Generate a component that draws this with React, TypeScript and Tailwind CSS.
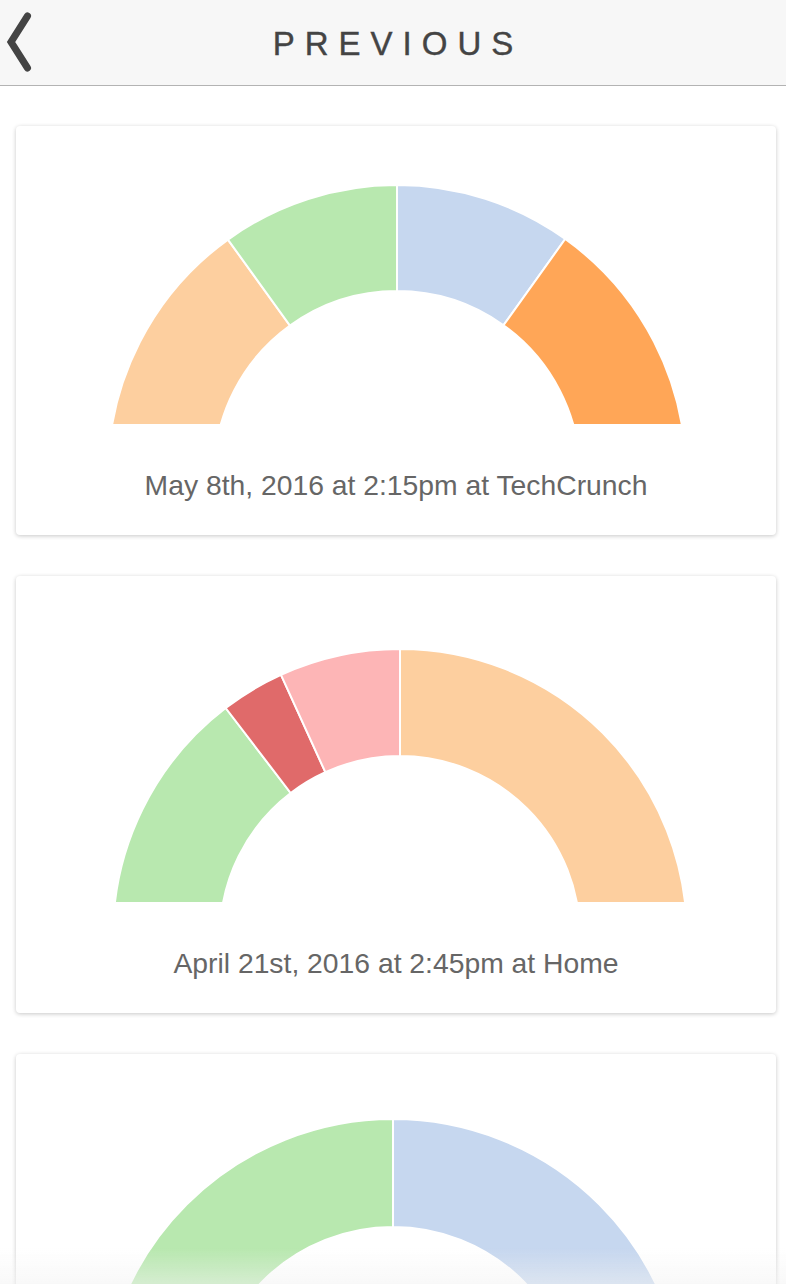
import React from 'react'

type Segment = { from: number; to: number; color: string }

interface VisitCardProps {
  height: number
  cx: number
  cy: number
  outer: number
  inner: number
  segments: Segment[]
  label?: string
}

// angle in degrees, measured clockwise from straight up
const point = (cx: number, cy: number, radius: number, angle: number) => {
  const rad = (angle * Math.PI) / 180
  return [cx + radius * Math.sin(rad), cy - radius * Math.cos(rad)]
}

const arcPath = (cx: number, cy: number, outer: number, inner: number, a0: number, a1: number) => {
  const large = a1 - a0 > 180 ? 1 : 0
  const [ox0, oy0] = point(cx, cy, outer, a0)
  const [ox1, oy1] = point(cx, cy, outer, a1)
  const [ix1, iy1] = point(cx, cy, inner, a1)
  const [ix0, iy0] = point(cx, cy, inner, a0)
  return `M${ox0} ${oy0} A${outer} ${outer} 0 ${large} 1 ${ox1} ${oy1} L${ix1} ${iy1} A${inner} ${inner} 0 ${large} 0 ${ix0} ${iy0} Z`
}

const VisitCard: React.FC<VisitCardProps> = ({ height, cx, cy, outer, inner, segments, label }) => {
  return (
    <div className="ml-4 mr-[10px] rounded bg-white shadow-[0_1px_4px_rgba(0,0,0,0.22)] overflow-hidden">
      <svg width={760} height={height} viewBox={`0 0 760 ${height}`} className="block">
        {segments.map((s, i) => (
          <path
            key={i}
            d={arcPath(cx, cy, outer, inner, s.from, s.to)}
            fill={s.color}
            stroke="#ffffff"
            strokeWidth={2}
          />
        ))}
      </svg>
      {label ? (
        <p className="mt-[46px] pb-[35px] text-center text-[28.3px] leading-[30px] text-[#666666] font-['Liberation_Sans',Arial,sans-serif]">
          {label}
        </p>
      ) : (
        <div className="h-[120px]" />
      )}
    </div>
  )
}

const PEACH = '#fdcf9f'
const GREEN = '#b8e8af'
const BLUE = '#c6d7ef'
const ORANGE = '#ffa657'
const RED = '#e06a6a'
const PINK = '#fdb5b6'

export default function App() {
  return (
    <div className="min-h-screen bg-white font-['Liberation_Sans',Arial,sans-serif]">
      {/* Header */}
      <div className="grid grid-cols-[60px_1fr_60px] items-center h-[86px] bg-[#f7f7f7] border-b border-[#b3b3b3]">
        <svg width="40" height="86" viewBox="0 0 40 86" className="block">
          <polyline
            points="27.5,16 11,42 27.5,68"
            fill="none"
            stroke="#444444"
            strokeWidth={7}
            strokeLinecap="round"
            strokeLinejoin="miter"
          />
        </svg>
        <h1 className="text-center text-[33px] leading-none tracking-[10px] text-[#444444] pl-[10px] [-webkit-text-stroke:0.4px_#444444]">
          PREVIOUS
        </h1>
        <div />
      </div>

      {/* Visits */}
      <div className="flex flex-col gap-[41px] pt-[40px] pb-[40px]">
        <VisitCard
          height={298}
          cx={381}
          cy={348}
          outer={289}
          inner={183}
          segments={[
            { from: -90, to: -35.8, color: PEACH },
            { from: -35.8, to: 0, color: GREEN },
            { from: 0, to: 35.6, color: BLUE },
            { from: 35.6, to: 90, color: ORANGE },
          ]}
          label="May 8th, 2016 at 2:15pm at TechCrunch"
        />
        <VisitCard
          height={326}
          cx={384}
          cy={360}
          outer={287}
          inner={180}
          segments={[
            { from: -90, to: -37.4, color: GREEN },
            { from: -37.4, to: -24.5, color: RED },
            { from: -24.5, to: 0, color: PINK },
            { from: 0, to: 90, color: PEACH },
          ]}
          label="April 21st, 2016 at 2:45pm at Home"
        />
        <VisitCard
          height={320}
          cx={377}
          cy={357}
          outer={292}
          inner={184}
          segments={[
            { from: -90, to: 0, color: GREEN },
            { from: 0, to: 90, color: BLUE },
          ]}
        />
      </div>

      {/* bottom fade */}
      <div className="fixed bottom-0 left-0 right-0 h-[36px] bg-gradient-to-b from-white/0 to-[#f2f2f2]/50 pointer-events-none" />
    </div>
  )
}
